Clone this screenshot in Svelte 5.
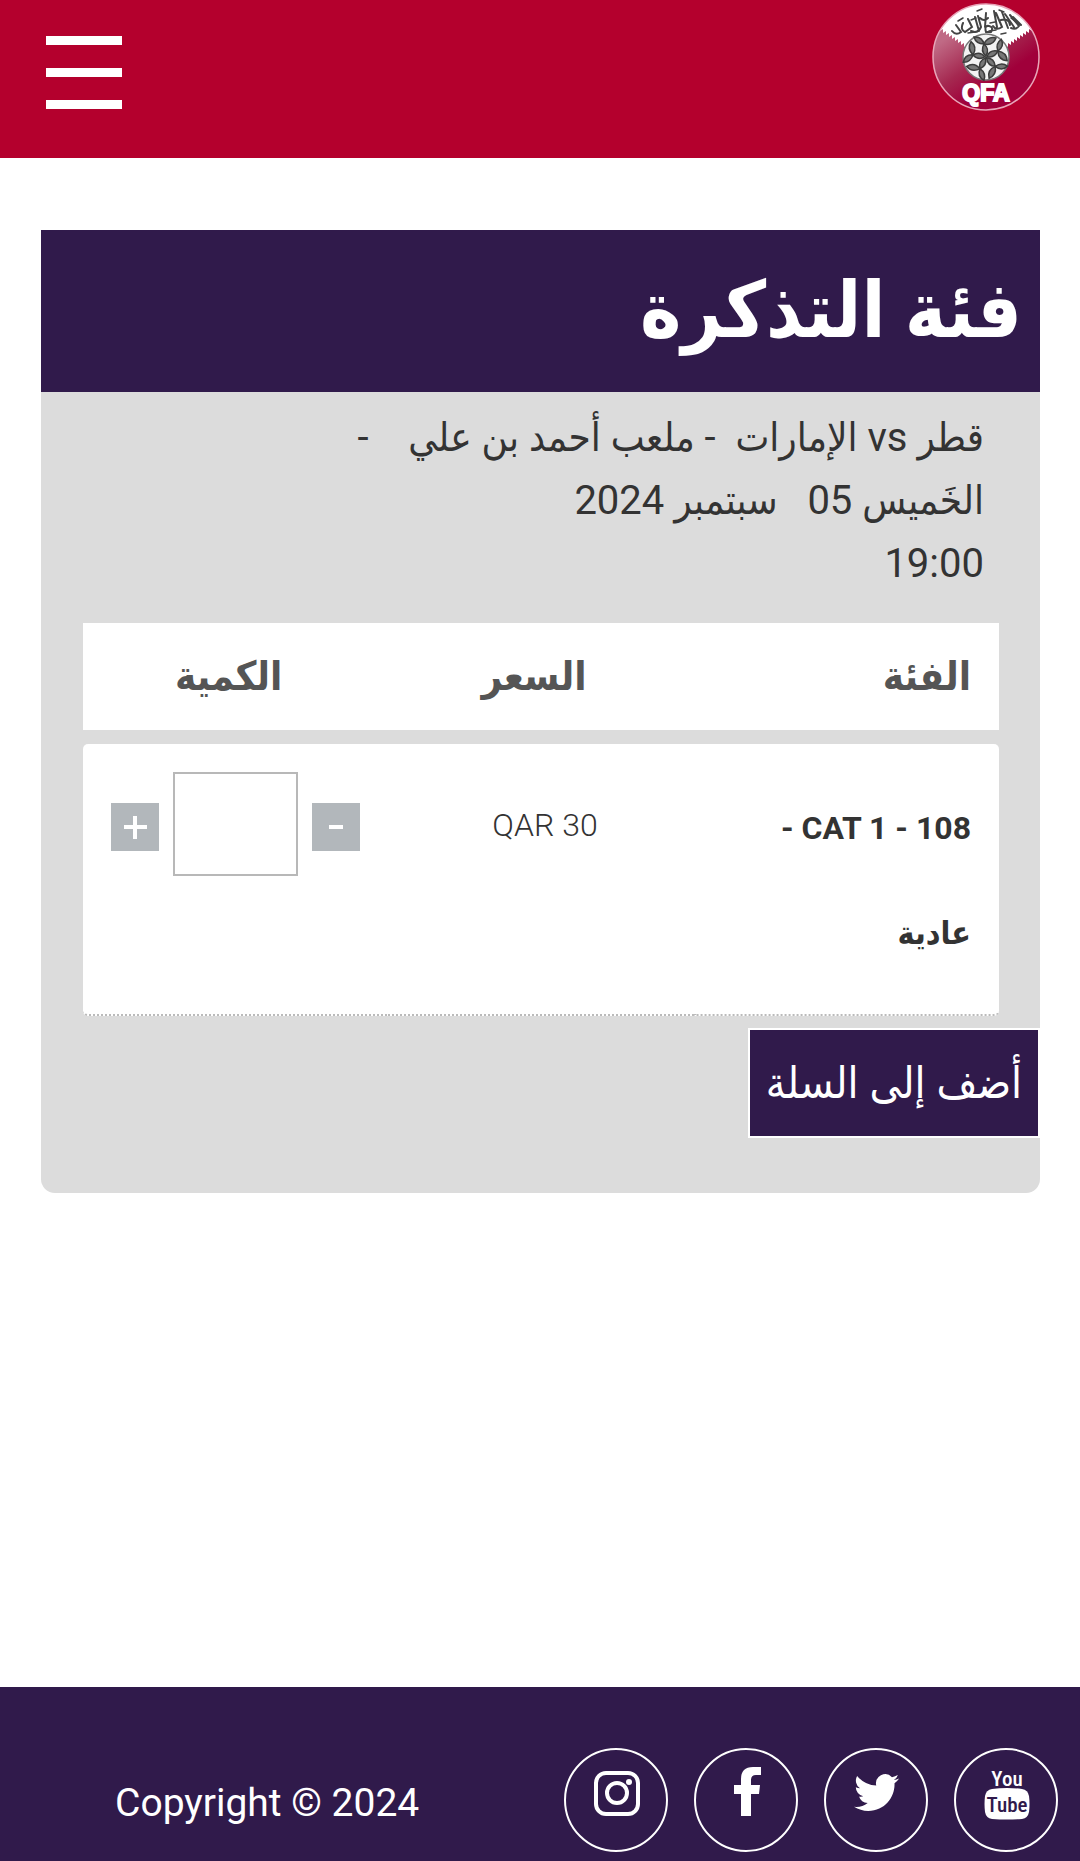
<script>
    let quantity = '';

    const tickets = [
        { category: 'CAT 1 - 108 -', type: 'عادية', price: 'QAR 30' }
    ];

    // zigzag edge of the crest, where the white meets the maroon
    const teeth = [];
    for (let i = 0; i <= 8; i++) {
        teeth.push([8 + i * 3, 28 + i * 2], [11 + i * 3, 26 + i * 2]);
    }
    const leftTeeth = teeth.map(([x, y]) => `${x},${y}`).join(' ');
    const rightTeeth = teeth.map(([x, y]) => `${108 - x},${y}`).reverse().join(' ');

    const petals = [0, 72, 144, 216, 288];

    function increase() {
        quantity = Number(quantity) + 1;
    }

    function decrease() {
        if (Number(quantity) > 0) {
            quantity = Number(quantity) - 1;
        }
    }
</script>

<div class="page" dir="rtl">
    <header class="topbar" dir="ltr">
        <button class="menu" type="button" aria-label="القائمة">
            <span></span>
            <span></span>
            <span></span>
        </button>
        <a class="logo" href="/" aria-label="QFA">
            <svg viewBox="0 0 108 108">
                <defs>
                    <linearGradient id="maroon" x1="0" y1="0.2" x2="0.5" y2="0.9">
                        <stop offset="0.2" stop-color="#c06a85" />
                        <stop offset="0.6" stop-color="#a52850" />
                        <stop offset="0.9" stop-color="#a0003a" />
                    </linearGradient>
                    <clipPath id="disc"><circle cx="54" cy="54" r="53" /></clipPath>
                </defs>
                <circle cx="54" cy="54" r="53" fill="url(#maroon)" />
                <g clip-path="url(#disc)">
                    <polygon points="0,26 {leftTeeth} 54,60 {rightTeeth} 108,26 108,0 0,0" fill="#fff" />
                </g>
                <g fill="none" stroke="#444" stroke-width="2" stroke-linecap="round">
                    <path d="M20 28q4 5 9 1l-5-7m7-2q-3 7 2 9l7-5-4-8m7-2 4 14m-8 0q7 3 10-4l-3-11m7 11 1-14m-6 5q4 4 8 0m-2 14q-2-7 3-6t2 6zM62 8l3 16m-1-14 6 14q-6 4-9-1m9-14 6 16m-3-14 9 13m-13-7q8-2 9 5m0-10 9 11q-3 4-8 2m2-11 8 8" />
                    <path d="M26 18l5-3m5 15 7-1m2-21 5-2m7 22 7-1m3-20 5 2m7 6 5 4m-15 12 5-1m-35-13 5-2m14 5 5-1" stroke-width="1.5" />
                </g>
                <circle cx="54" cy="54" r="23" fill="#f3f3f3" stroke="#777" stroke-width="1.5" />
                {#each petals as angle}
                    <g transform="rotate({angle} 54 54)" fill="#777" stroke="#3c3c3c" stroke-width="1.5">
                        <path d="M54 53q-6-5-2-12 6 5 2 12z" />
                        <path d="M52 41q-8 0-10-7 8-1 10 7z" />
                        <path d="M52 41q4-8 12-6-3 8-12 6z" />
                    </g>
                {/each}
                <text x="54" y="98" text-anchor="middle" class="crest">QFA</text>
                <circle cx="54" cy="54" r="53" fill="none" stroke="#e8a6b9" stroke-width="1.5" />
            </svg>
        </a>
    </header>

    <main>
        <section class="card">
            <h1>فئة التذكرة</h1>
            <div class="match">
                <p>قطر vs الإمارات&nbsp; - ملعب أحمد بن علي &nbsp;&nbsp; -</p>
                <p>الخَميس 05 &nbsp; سبتمبر 2024</p>
                <p>19:00</p>
            </div>

            <form on:submit|preventDefault>
                <div class="table-wrap">
                    <table>
                        <thead>
                            <tr>
                                <th class="category">الفئة</th>
                                <th>السعر</th>
                                <th>الكمية</th>
                            </tr>
                        </thead>
                        <tbody>
                            {#each tickets as ticket}
                                <tr>
                                    <td class="category">{ticket.category}<br />{ticket.type}</td>
                                    <td class="price">{ticket.price}</td>
                                    <td>
                                        <div class="quantity">
                                            <button type="button" aria-label="-" on:click={decrease}>
                                                <svg viewBox="0 0 48 48"><path d="M17 24h14" /></svg>
                                            </button>
                                            <input type="text" inputmode="numeric" aria-label="الكمية" bind:value={quantity} />
                                            <button type="button" aria-label="+" on:click={increase}>
                                                <svg viewBox="0 0 48 48"><path d="M13 24h23M24 13v23" /></svg>
                                            </button>
                                        </div>
                                    </td>
                                </tr>
                            {/each}
                        </tbody>
                    </table>
                </div>
                <button class="add" type="submit">أضف إلى السلة</button>
            </form>
        </section>
    </main>

    <footer dir="ltr">
        <p>Copyright © 2024</p>
        <nav>
            <a href="#instagram" aria-label="Instagram">
                <svg viewBox="0 0 100 100">
                    <rect x="30" y="23" width="42" height="41" rx="10" fill="none" stroke="#fff" stroke-width="4" />
                    <circle cx="51" cy="43" r="10" fill="none" stroke="#fff" stroke-width="4" />
                    <circle cx="63" cy="32" r="3" />
                </svg>
            </a>
            <a href="#facebook" aria-label="Facebook">
                <svg viewBox="0 0 100 100">
                    <path d="M65 17v8h-5q-5 0-5 5v5h9l-1 9h-8v22h-10V44h-7v-9h7v-6q0-12 12-12z" />
                </svg>
            </a>
            <a href="#twitter" aria-label="Twitter">
                <svg viewBox="0 0 100 100">
                    <path transform="translate(28 20) scale(1.88)" d="M24 4.56a9.8 9.8 0 0 1-2.83.78 4.93 4.93 0 0 0 2.17-2.72 9.86 9.86 0 0 1-3.13 1.19 4.92 4.92 0 0 0-8.38 4.49A13.98 13.98 0 0 1 1.67 3.15a4.93 4.93 0 0 0 1.52 6.57 4.9 4.9 0 0 1-2.23-.61v.06a4.93 4.93 0 0 0 3.95 4.83 4.93 4.93 0 0 1-2.22.08 4.93 4.93 0 0 0 4.6 3.42A9.9 9.9 0 0 1 0 19.54a13.94 13.94 0 0 0 7.55 2.21c9.14 0 14.3-7.72 14-14.64A10 10 0 0 0 24 4.56z" />
                </svg>
            </a>
            <a href="#youtube" aria-label="YouTube">
                <svg viewBox="0 0 100 100">
                    <text x="51" y="36" text-anchor="middle" class="you">You</text>
                    <path d="M36 39q15-2 30 0 6 1 7 7 1 8 0 16-1 6-7 7-15 1-30 0-6-1-7-7-1-8 0-16 1-6 7-7z" />
                    <text x="51" y="62" text-anchor="middle" class="you tube">Tube</text>
                </svg>
            </a>
        </nav>
    </footer>
</div>

<style>
    :global(body) {
        background: #fff;
    }

    .page {
        display: flex;
        flex-direction: column;
        min-height: 100vh;
        color: #333;
        font-family: Roboto, "DejaVu Sans Condensed", "DejaVu Sans", sans-serif;
        font-size: 40px;
    }

    h1, p {
        margin: 0;
    }

    button, input {
        font: inherit;
        cursor: pointer;
    }

    .topbar {
        display: flex;
        justify-content: space-between;
        align-items: flex-start;
        height: 158px;
        padding: 0 40px 0 46px;
        box-sizing: border-box;
        background: #b4002d;
    }

    .menu {
        display: flex;
        flex-direction: column;
        gap: 23px;
        margin-top: 36px;
        padding: 0;
        border: none;
        background: none;
    }

    .menu span {
        width: 76px;
        height: 9px;
        background: #fff;
    }

    .logo {
        width: 108px;
        height: 108px;
        margin-top: 3px;
    }

    svg {
        display: block;
        width: 100%;
        height: 100%;
    }

    .crest {
        fill: #fff;
        stroke: #fff;
        stroke-width: 2;
        font-family: "Liberation Sans", sans-serif;
        font-size: 23px;
        font-weight: 700;
    }

    main {
        flex: 1;
        padding: 72px 40px 0 41px;
    }

    .card {
        padding-bottom: 55px;
        border-radius: 0 0 14px 14px;
        background: #dcdcdc;
    }

    h1 {
        padding: 0 18px;
        background: #301a4b;
        color: #fff;
        font-size: 78px;
        line-height: 162px;
    }

    .match {
        padding: 14px 56px 0;
        line-height: 63px;
    }

    .table-wrap {
        padding: 16px 41px 0 42px;
    }

    table {
        width: 100%;
        table-layout: fixed;
        border-collapse: separate;
        border-spacing: 0 14px;
        margin: -2px 0;
    }

    th, td {
        padding: 0 28px;
        background: #fff;
        text-align: center;
    }

    th {
        height: 107px;
        padding: 0 28px 0 14px;
        color: #555;
        font-size: 40px;
    }

    td {
        height: 272px;
        box-sizing: border-box;
        border-bottom: 2px dotted #bbb;
        vertical-align: top;
    }

    th.category, td.category {
        text-align: start;
    }

    td.category {
        padding-top: 32px;
        border-radius: 0 5px 5px 0;
        font-size: 32px;
        font-weight: 700;
        line-height: 105px;
    }

    td:last-child {
        border-radius: 5px 0 0 5px;
    }

    td.price {
        padding-top: 55px;
        padding-right: 20px;
        font-size: 32px;
        font-weight: 300;
        line-height: 52px;
    }

    .quantity {
        display: flex;
        justify-content: center;
        align-items: center;
        gap: 14px;
        padding-top: 28px;
    }

    .quantity button {
        flex: none;
        width: 48px;
        height: 48px;
        margin-top: 6px;
        padding: 0;
        border: none;
        background: #b2b7bb;
    }

    .quantity path {
        fill: none;
        stroke: #fff;
        stroke-width: 4;
    }

    .quantity input {
        width: 125px;
        height: 104px;
        box-sizing: border-box;
        border: 2px solid #b8b8b8;
        background: #fff;
        text-align: center;
    }

    .add {
        display: block;
        height: 110px;
        padding: 0 16px;
        border: 2px solid #fff;
        background: #301a4b;
        color: #fff;
        font-size: 44px;
    }

    footer {
        display: flex;
        justify-content: space-between;
        align-items: center;
        padding: 61px 22px 9px 115px;
        background: #301a4b;
        color: #fff;
        font-size: 39px;
    }

    footer p {
        padding-top: 6px;
    }

    nav {
        display: flex;
        gap: 26px;
    }

    nav a {
        width: 104px;
        height: 104px;
        box-sizing: border-box;
        border: 2px solid #fff;
        border-radius: 50%;
    }

    nav svg {
        fill: #fff;
    }

    .you {
        font-family: "Liberation Sans Narrow", "Roboto Condensed", Roboto, sans-serif;
        font-size: 21px;
        font-weight: 500;
    }

    .tube {
        fill: #301a4b;
    }
</style>
